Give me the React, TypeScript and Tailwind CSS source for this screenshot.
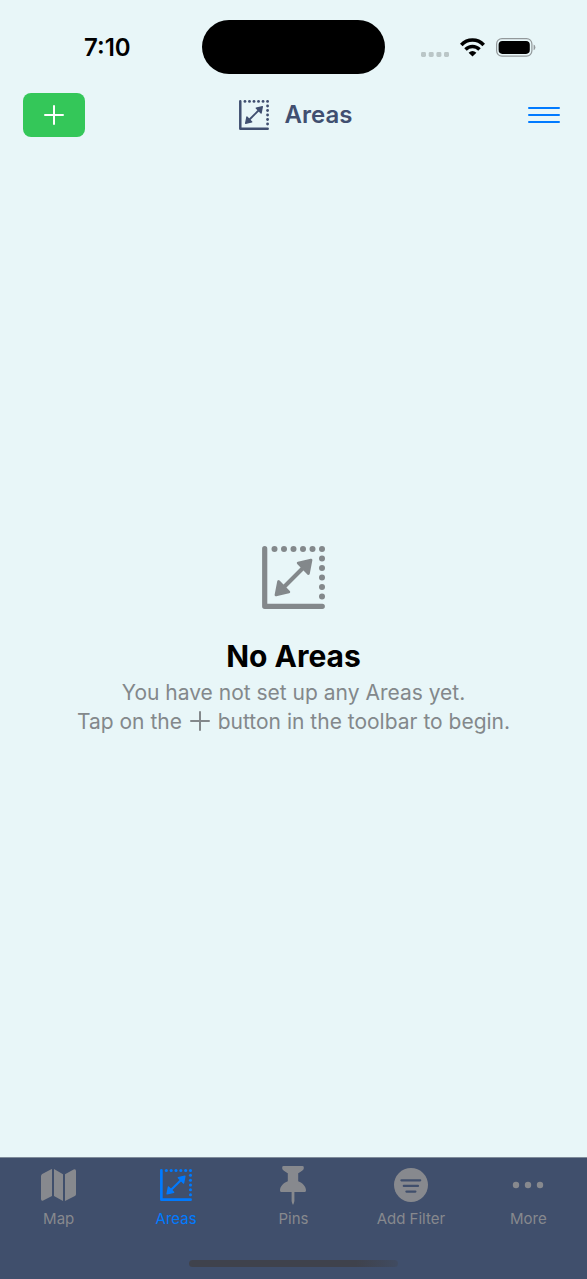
import type { ReactNode } from "react";

function AreasIcon({ className }: { className: string }) {
  const top = [12.5, 22, 31.5, 41, 50.5, 60];
  const side = [12.5, 22, 31.5, 41, 50.5];
  return (
    <svg viewBox="0 0 63 63" className={className} fill="currentColor" aria-hidden="true">
      <path d="M2.7 2.7V60.3H60.3" fill="none" stroke="currentColor" strokeWidth="5.2" strokeLinecap="round" strokeLinejoin="round" />
      {top.map((x) => (
        <circle key={x} cx={x} cy="3" r="3" />
      ))}
      {side.map((y) => (
        <circle key={y} cx="60" cy={y} r="3" />
      ))}
      <path d="M20 43L43 20" stroke="currentColor" strokeWidth="4" />
      <path d="M49 14L36.2 17L46.4 27.4Z" stroke="currentColor" strokeWidth="2.8" strokeLinejoin="round" />
      <path d="M14 49L26.8 46L16.6 35.6Z" stroke="currentColor" strokeWidth="2.8" strokeLinejoin="round" />
    </svg>
  );
}

function PlusIcon({ className }: { className: string }) {
  return (
    <svg viewBox="0 0 20 20" className={className} fill="none" stroke="currentColor" strokeWidth="2" strokeLinecap="round" aria-hidden="true">
      <path d="M10 1V19M1 10H19" />
    </svg>
  );
}

function MapIcon() {
  return (
    <svg viewBox="0 0 35 32" className="h-8 w-[35px]" fill="currentColor" aria-hidden="true">
      <path d="M11 0V27L2.2 31.6Q0 32.4 0 30V7.2Q0 5.8 1.2 5.1L10.2 .2ZM13 0L22 5.2V32L13 27ZM24 5.2L32.6 .5Q35 -.4 35 2V25.2Q35 26.4 33.9 27L24 32Z" />
    </svg>
  );
}

function PinIcon() {
  return (
    <svg viewBox="0 0 26 39" className="h-[39px] w-[26px]" fill="currentColor" aria-hidden="true">
      <path d="M3.6 0H22.4Q23.8 0 23.8 1.4V2.2Q23.8 3.4 22.4 4.4Q19.5 6.4 18.2 7.2V15.2C22.6 16.8 26 20.3 26 24.4Q26 26 24.4 26H14.4V35Q14 37.8 13 39Q12 37.8 11.6 35V26H1.6Q0 26 0 24.4C0 20.3 3.4 16.8 7.8 15.2V7.2Q6.5 6.4 3.6 4.4Q2.2 3.4 2.2 2.2V1.4Q2.2 0 3.6 0Z" />
    </svg>
  );
}

function FilterIcon() {
  return (
    <svg viewBox="0 0 34 34" className="size-[34px]" aria-hidden="true">
      <circle cx="17" cy="17" r="17" fill="currentColor" />
      <path d="M7.4 12.3H26.2M9.8 17.9H24M12.4 23.6H21.4" stroke="#404f6c" strokeWidth="2.2" strokeLinecap="round" />
    </svg>
  );
}

function MoreIcon() {
  return (
    <svg viewBox="0 0 32 8" className="h-2 w-8" fill="currentColor" aria-hidden="true">
      <circle cx="4" cy="4" r="3.2" />
      <circle cx="16" cy="4" r="3.2" />
      <circle cx="28" cy="4" r="3.2" />
    </svg>
  );
}

function StatusBar() {
  return (
    <div className="grid grid-cols-[1fr_auto_1fr] items-center pt-5">
      <time className="pt-0.5 pl-[84px] text-2xl font-semibold">7:10</time>
      <div className="h-[54px] w-[183px] rounded-full bg-black" />
      <div className="flex items-center justify-end gap-[11px] pr-[51px]">
        <svg viewBox="0 0 28 19" className="h-[19px] w-7" fill="#bac6c7" aria-hidden="true">
          <rect x="0" y="14" width="5" height="5" rx="1.4" />
          <rect x="7.7" y="14" width="5" height="5" rx="1.4" />
          <rect x="15.4" y="14" width="5" height="5" rx="1.4" />
          <rect x="23" y="14" width="5" height="5" rx="1.4" />
        </svg>
        <svg viewBox="0 0 25 19" className="h-[19px] w-[25px]" fill="none" stroke="black" aria-hidden="true">
          <path d="M1.3 6.9Q6 2 12.5 2T23.7 6.9" strokeWidth="3.6" />
          <path d="M5.5 11.4Q8.5 8.4 12.5 8.4T19.5 11.4" strokeWidth="3.5" />
          <path d="M12.5 18.6L8.6 14.8Q12.5 11.4 16.4 14.8Z" fill="black" stroke="none" />
        </svg>
        <svg viewBox="0 0 40 19" className="h-[19px] w-10" aria-hidden="true">
          <rect x=".6" y=".6" width="35.3" height="17.6" rx="5.4" fill="none" stroke="#93999b" strokeWidth="1.2" />
          <rect x="2.6" y="2.9" width="31.2" height="13" rx="3.8" />
          <path d="M37.6 6.6Q39.4 7.4 39.4 9.4T37.6 12.2Z" fill="#93999b" />
        </svg>
      </div>
    </div>
  );
}

function Tab({ label, icon, active = false }: { label: string; icon: ReactNode; active?: boolean }) {
  return (
    <li>
      <a
        href="#"
        aria-current={active ? "page" : undefined}
        className={`flex flex-col items-center ${active ? "text-[#007aff]" : "text-[#87898e]"}`}
      >
        <span className="flex h-10 items-center">{icon}</span>
        <span className="pt-1 text-[15px] leading-5">{label}</span>
      </a>
    </li>
  );
}

export default function App() {
  return (
    <div className="flex min-h-screen flex-col bg-[#e8f6f8] font-['Inter','Liberation_Sans',sans-serif] text-black">
      <StatusBar />
      <header className="grid grid-cols-[1fr_auto_1fr] items-center px-[23px] pt-[19px]">
        <button aria-label="Add area" className="flex h-11 w-[62px] items-center justify-center rounded-lg bg-[#34c759] text-white">
          <PlusIcon className="size-5" />
        </button>
        <h1 className="flex items-center gap-4 pl-1 text-2xl font-semibold text-[#404f70]">
          <AreasIcon className="size-[30px]" />
          Areas
        </h1>
        <button aria-label="Menu" className="mr-1 justify-self-end text-[#007aff]">
          <svg viewBox="0 0 32 18" className="h-[18px] w-8" stroke="currentColor" strokeWidth="2" strokeLinecap="round" aria-hidden="true">
            <path d="M1 2H31M1 9H31M1 16H31" />
          </svg>
        </button>
      </header>
      <main className="flex flex-1 flex-col items-center justify-center pb-3 text-center">
        <AreasIcon className="size-[63px] text-[#83888b]" />
        <h2 className="pt-[27px] text-[30px] leading-10 font-bold">No Areas</h2>
        <p className="pt-0.5 text-[21px] leading-[29px] text-[#83888b]">
          You have not set up any Areas yet.
          <br />
          Tap on the <PlusIcon className="mx-0.5 mb-1 inline size-5" /> button in the toolbar to begin.
        </p>
      </main>
      <nav aria-label="Tabs" className="border-t border-[#7f8c9b] bg-[#404f6c] pt-[7px] pb-3">
        <ul className="grid grid-cols-5">
          <Tab label="Map" icon={<MapIcon />} />
          <Tab label="Areas" icon={<AreasIcon className="size-8" />} active />
          <Tab label="Pins" icon={<PinIcon />} />
          <Tab label="Add Filter" icon={<FilterIcon />} />
          <Tab label="More" icon={<MoreIcon />} />
        </ul>
        <div className="mx-auto mt-[31px] h-[7px] w-[209px] rounded-full bg-linear-to-r from-[#3f424c] from-80% to-[#404b61]" />
      </nav>
    </div>
  );
}
